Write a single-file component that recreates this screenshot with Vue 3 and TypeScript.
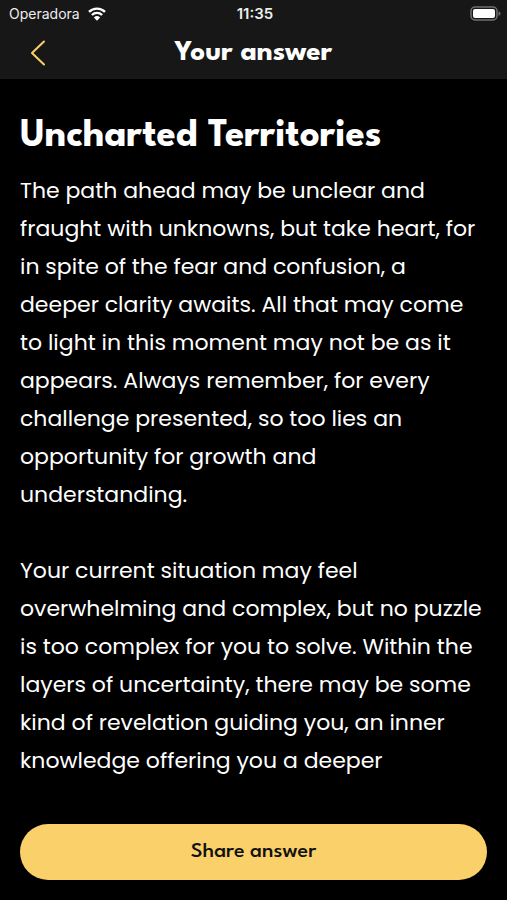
<script setup lang="ts">
const title: string = 'Uncharted Territories'
const paragraphs: string[] = [
  'The path ahead may be unclear and fraught with unknowns, but take heart, for in spite of the fear and confusion, a deeper clarity awaits. All that may come to light in this moment may not be as it appears. Always remember, for every challenge presented, so too lies an opportunity for growth and understanding.',
  'Your current situation may feel overwhelming and complex, but no puzzle is too complex for you to solve. Within the layers of uncertainty, there may be some kind of revelation guiding you, an inner knowledge offering you a deeper',
]
</script>

<template>
  <div class="screen">
    <header class="top">
      <div class="status">
        <div class="carrier">
          <span>Operadora</span>
          <svg class="wifi" viewBox="0 0 18 14" aria-hidden="true">
            <path d="M1 4.9a11.4 11.4 0 0 1 16 0" />
            <path d="M3.9 8a7.3 7.3 0 0 1 10.2 0" />
            <path class="dot" d="M9 13.7 5.9 10.5a4.5 4.5 0 0 1 6.2 0Z" />
          </svg>
        </div>
        <time class="time">11:35</time>
        <svg class="battery" viewBox="0 0 31 15" aria-hidden="true">
          <rect class="shell" x="1" y="1" width="26" height="13" rx="4" />
          <rect class="charge" x="3" y="3" width="22" height="9" rx="2" />
          <path class="tip" d="M28.5 5.2c2.7.8 2.7 3.8 0 4.6Z" />
        </svg>
      </div>
      <nav class="bar">
        <button class="back" type="button" aria-label="Back">
          <svg viewBox="0 0 16 26" aria-hidden="true">
            <path d="M14 1.5 2 13l12 11.5" />
          </svg>
        </button>
        <h1>Your answer</h1>
      </nav>
    </header>

    <main class="content">
      <h2>{{ title }}</h2>
      <p v-for="(text, i) in paragraphs" :key="i">{{ text }}</p>
    </main>

    <footer class="footer">
      <button class="share" type="button">Share answer</button>
    </footer>
  </div>
</template>

<style>
body {
  background: #000;
}
</style>

<style scoped>
.screen {
  display: flex;
  flex-direction: column;
  min-height: 100vh;
  box-sizing: border-box;
  background: #000;
  color: #fff;
  font-family: Poppins, Inter, sans-serif;
}
.top {
  background: #171717;
}
.status {
  display: grid;
  grid-template-columns: 1fr auto 1fr;
  align-items: center;
  height: 27px;
  padding: 0 6px 0 9px;
  font-family: Inter, sans-serif;
  font-size: 14px;
  color: #ededed;
}
.carrier {
  display: flex;
  align-items: center;
  gap: 8px;
}
.wifi {
  width: 18px;
  height: 14px;
  fill: none;
  stroke: #fff;
  stroke-width: 2.4;
}
.wifi .dot {
  fill: #fff;
  stroke: none;
}
.time {
  font-size: 15px;
  font-weight: 600;
}
.battery {
  justify-self: end;
  width: 31px;
  height: 15px;
}
.shell {
  fill: none;
  stroke: #707070;
  stroke-width: 1.5;
}
.charge {
  fill: #fff;
}
.tip {
  fill: #707070;
}
.bar {
  display: grid;
  grid-template-columns: 56px 1fr 56px;
  align-items: center;
  height: 52px;
  padding: 0 10px;
  box-sizing: border-box;
}
.back {
  display: flex;
  justify-content: center;
  padding: 4px;
  border: 0;
  background: none;
  cursor: pointer;
}
.back svg {
  width: 16px;
  height: 26px;
  fill: none;
  stroke: #f9d069;
  stroke-width: 2;
  stroke-linecap: round;
  stroke-linejoin: round;
}
h1,
h2,
.share {
  font-family: "League Spartan", Lato, sans-serif;
}
h1 {
  margin: 0;
  text-align: center;
  font-size: 29px;
  line-height: 32px;
  font-weight: 700;
}
.content {
  flex: 1;
  padding: 37px 20px 40px;
}
h2 {
  margin: 0 0 14px;
  font-size: 39px;
  line-height: 42px;
  font-weight: 700;
}
p {
  margin: 0 0 38px;
  font-size: 22px;
  line-height: 38px;
}
p:last-child {
  margin-bottom: 0;
}
.footer {
  padding: 0 20px 20px;
}
.share {
  width: 100%;
  height: 56px;
  border: 0;
  border-radius: 28px;
  background: #f9d069;
  color: #111;
  font-size: 22px;
  font-weight: 500;
  cursor: pointer;
}
</style>
